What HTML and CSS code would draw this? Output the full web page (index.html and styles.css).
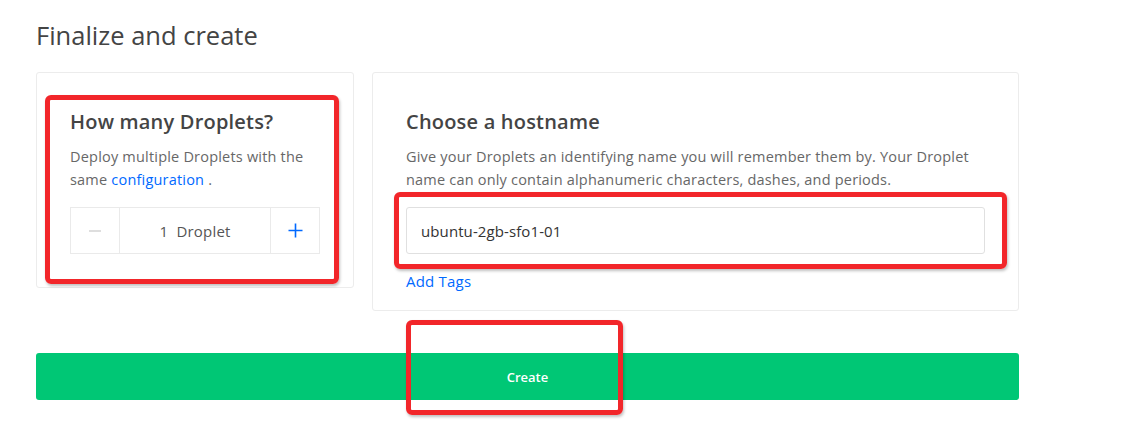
FILE: index.html
```html
<!DOCTYPE html>
<html>
<head>
<meta charset="utf-8">
<link rel="stylesheet" href="styles.css">
</head>
<body>
<div class="page">
  <h1 class="title">Finalize and create</h1>
  <div class="cards">
    <div class="card card-count">
      <h2 class="card-title">How many Droplets?</h2>
      <p class="card-desc">Deploy multiple Droplets with the same <a class="link">configuration</a>&nbsp;.</p>
      <div class="stepper">
        <div class="step-btn minus">
          <svg width="14" height="14" viewBox="0 0 14 14"><path d="M1 7h12" stroke="#d0d0d0" stroke-width="1.4"/></svg>
        </div>
        <div class="step-value">1&nbsp; Droplet</div>
        <div class="step-btn plus">
          <svg width="15" height="15" viewBox="0 0 15 15"><path d="M0.5 7.5h14M7.5 0.5v14" stroke="#0069ff" stroke-width="1.6"/></svg>
        </div>
      </div>
    </div>
    <div class="card card-host">
      <h2 class="card-title">Choose a hostname</h2>
      <p class="card-desc">Give your Droplets an identifying name you will remember them by. Your Droplet name can only contain alphanumeric characters, dashes, and periods.</p>
      <div class="input">ubuntu-2gb-sfo1-01</div>
      <a class="link tags">Add Tags</a>
    </div>
  </div>
  <div class="create">Create</div>
  <div class="mark mark-1"></div>
  <div class="mark mark-2"></div>
  <div class="mark mark-3"></div>
</div>
</body>
</html>
```
FILE: styles.css
```css
* { box-sizing: border-box; }
html, body { margin: 0; padding: 0; background: #fff; }
body { font-family: "Open Sans", "Liberation Sans", sans-serif; color: #444; }
.page { position: relative; width: 1126px; height: 429px; padding: 19px 0 0 36px; }
.title { margin: 0; font-size: 25.5px; font-weight: 400; color: #444; line-height: 33px; }
.cards { display: flex; align-items: flex-start; gap: 18px; margin-top: 20px; }
.card { border: 1px solid #ececec; border-radius: 3px; background: #fff; }
.card-count { width: 318px; height: 216px; padding: 36px 33px 0 33px; }
.card-host { width: 647px; height: 239px; padding: 36px 33px 0 33px; }
.card-title { margin: 0; font-size: 20px; font-weight: 600; color: #444; line-height: 26px; letter-spacing: 0.2px; }
.card-desc { margin: 10px 0 0; font-size: 14.5px; color: #676767; line-height: 23px; letter-spacing: 0.2px; }
.link { color: #0069ff; text-decoration: none; }
.stepper { display: flex; margin-top: 16px; height: 47px; border: 1px solid #eaeaea; }
.step-btn { width: 48px; display: flex; align-items: center; justify-content: center; }
.step-value { flex: 1; display: flex; align-items: center; justify-content: center; border-left: 1px solid #eaeaea; border-right: 1px solid #eaeaea; font-size: 15px; color: #555; letter-spacing: 0.2px; }
.input { margin-top: 16px; height: 47px; border: 1px solid #e0e0e0; border-radius: 3px; padding: 0 14px; display: flex; align-items: center; font-size: 15px; color: #333; letter-spacing: 0.1px; }
.tags { display: block; margin-top: 17px; font-size: 15px; line-height: 20px; letter-spacing: 0.2px; }
.create { margin-top: 42px; width: 983px; height: 47px; border-radius: 3px; background: #00c775; color: #fff; font-size: 13px; font-weight: 600; display: flex; align-items: center; justify-content: center; }
.mark { position: absolute; border: 5px solid #f2262a; border-radius: 6px; box-shadow: 1px 2px 3px rgba(0,0,0,0.25); }
.mark-1 { left: 45px; top: 95px; width: 294px; height: 189px; }
.mark-2 { left: 394px; top: 192px; width: 613px; height: 77px; }
.mark-3 { left: 406px; top: 320px; width: 217px; height: 95px; }
```
